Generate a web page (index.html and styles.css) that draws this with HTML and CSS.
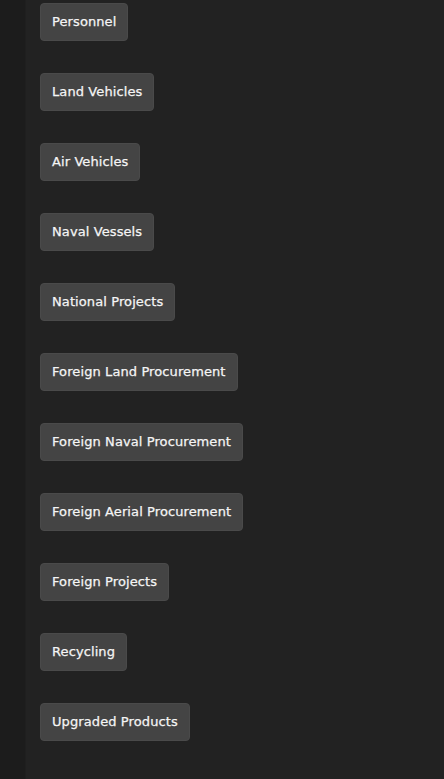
FILE: index.html
```html
<!DOCTYPE html>
<html lang="en">
<head>
  <meta charset="UTF-8">
  <meta name="viewport" content="width=device-width, initial-scale=1.0">
  <title>Categories</title>
  <link rel="stylesheet" href="styles.css">
</head>
<body>
  <div class="layout">
    <div class="sidebar"></div>
    <div class="content">
      <button class="cat-btn">Personnel</button>
      <button class="cat-btn">Land Vehicles</button>
      <button class="cat-btn">Air Vehicles</button>
      <button class="cat-btn">Naval Vessels</button>
      <button class="cat-btn">National Projects</button>
      <button class="cat-btn">Foreign Land Procurement</button>
      <button class="cat-btn">Foreign Naval Procurement</button>
      <button class="cat-btn">Foreign Aerial Procurement</button>
      <button class="cat-btn">Foreign Projects</button>
      <button class="cat-btn">Recycling</button>
      <button class="cat-btn">Upgraded Products</button>
    </div>
  </div>
</body>
</html>
```
FILE: styles.css
```css
html, body {
  margin: 0;
  padding: 0;
  height: 100%;
  background-color: #222;
}
.layout {
  display: flex;
  min-height: 100%;
}
.sidebar {
  width: 25px;
  background-color: #1c1c1c;
  border-right: 1px solid #1f1f1f;
}
.content {
  display: flex;
  flex-direction: column;
  align-items: flex-start;
  gap: 32px;
  padding: 3px 0 0 14px;
}
.cat-btn {
  background-color: #444;
  color: #f5f5f5;
  font-family: "DejaVu Sans", sans-serif;
  font-size: 13px;
  font-weight: normal;
  letter-spacing: 0.1px;
  -webkit-text-stroke: 0.25px #f5f5f5;
  height: 38px;
  padding: 0 11px 1px;
  border: 1px solid #4a4a4a;
  border-radius: 4px;
  cursor: pointer;
}
.cat-btn:hover {
  background-color: #505050;
}
```
